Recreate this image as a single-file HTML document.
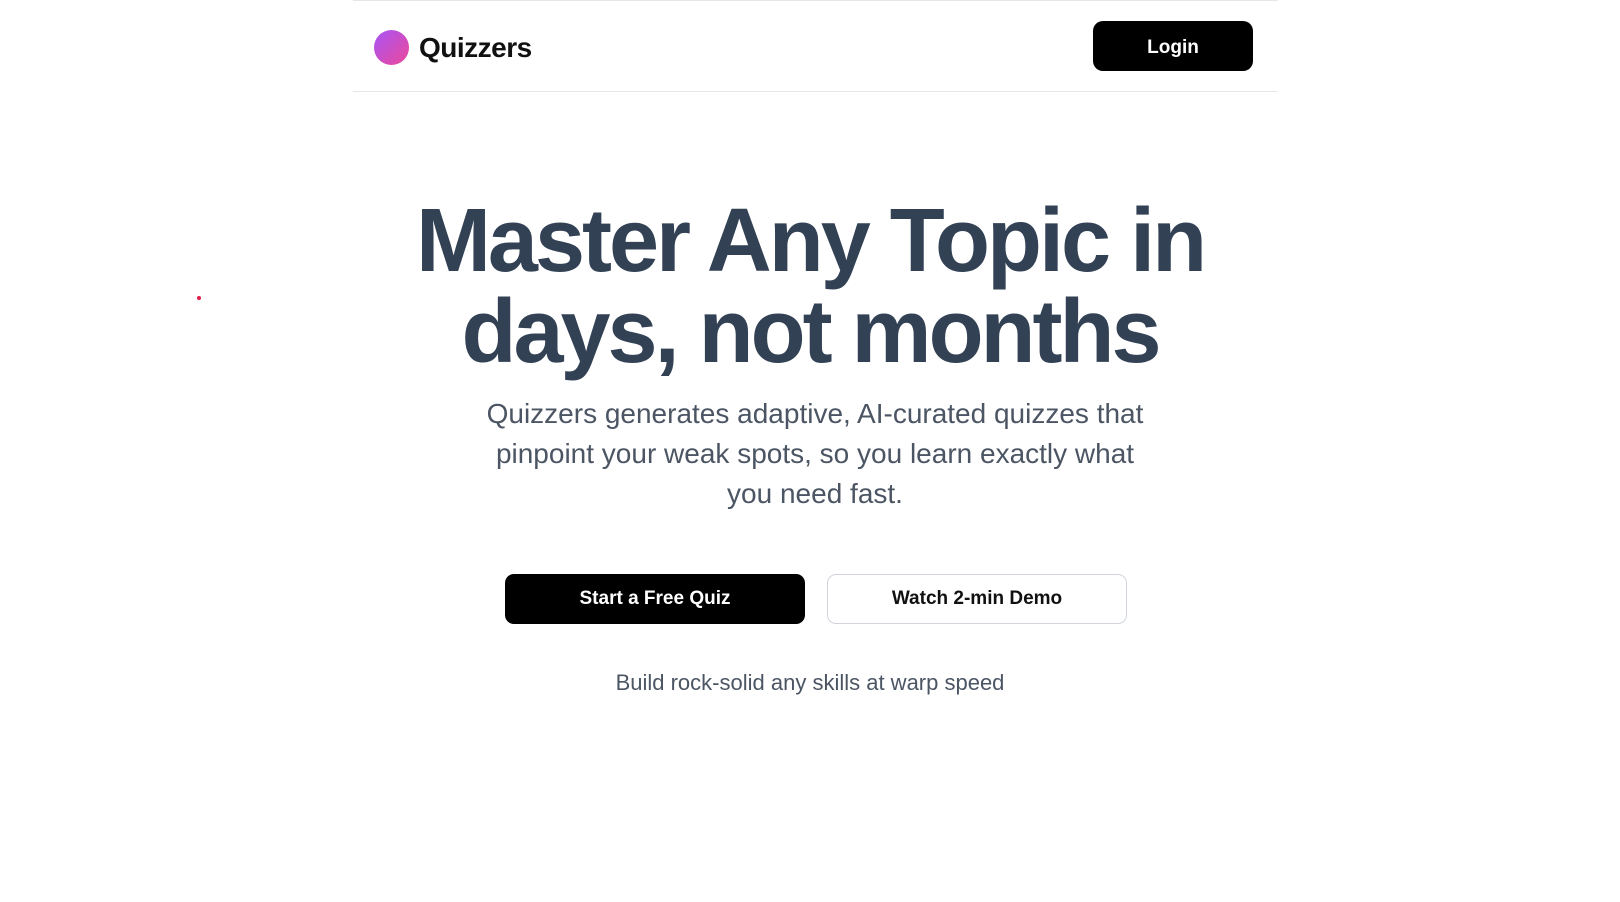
<!DOCTYPE html>
<html><head><meta charset="utf-8"><style>
*{margin:0;padding:0;box-sizing:border-box}
body{width:1620px;height:902px;background:#fff;font-family:"Liberation Sans",sans-serif;position:relative;overflow:hidden}
.hdr{position:absolute;left:353px;width:925px;top:0;height:92px;border-top:1px solid #e5e7eb;border-bottom:1px solid #e5e7eb}
.logo{position:absolute;left:21px;top:29px;width:35px;height:35px;border-radius:50%;background:linear-gradient(135deg,#a855f7,#ec4899)}
.brand{position:absolute;left:66px;top:31px;font-size:28px;font-weight:bold;color:#111;letter-spacing:-0.5px}
.login{position:absolute;left:740px;top:20px;width:160px;height:50px;background:#000;color:#fff;border-radius:10px;font-weight:bold;font-size:19px;display:flex;align-items:center;justify-content:center;padding-top:3px}
h1{position:absolute;left:0;width:1620px;top:196px;text-align:center;color:#334155;font-size:90px;line-height:91px;font-weight:bold;letter-spacing:-3px}
.sub{position:absolute;left:475px;width:680px;top:394px;text-align:center;color:#4b5563;font-size:28px;line-height:40px}
.b1,.b2{position:absolute;top:574px;width:300px;height:50px;border-radius:9px;font-size:19px;font-weight:bold;display:flex;align-items:center;justify-content:center}
.b1{left:505px;background:#000;color:#fff}
.b2{left:827px;background:#fff;color:#111;border:1px solid #d1d5db}
.tag{position:absolute;left:0;width:1620px;top:670px;text-align:center;color:#4b5563;font-size:22px}
.dot{position:absolute;left:197px;top:296px;width:4px;height:4px;border-radius:50%;background:#e11d48}
</style></head><body>
<div class="hdr"><div class="logo"></div><div class="brand">Quizzers</div><div class="login">Login</div></div>
<div class="dot"></div>
<h1>Master Any Topic in<br>days, not months</h1>
<div class="sub">Quizzers generates adaptive, AI-curated quizzes that pinpoint your weak spots, so you learn exactly what you need fast.</div>
<div class="b1">Start a Free Quiz</div>
<div class="b2">Watch 2-min Demo</div>
<div class="tag">Build rock-solid any skills at warp speed</div>
</body></html>
